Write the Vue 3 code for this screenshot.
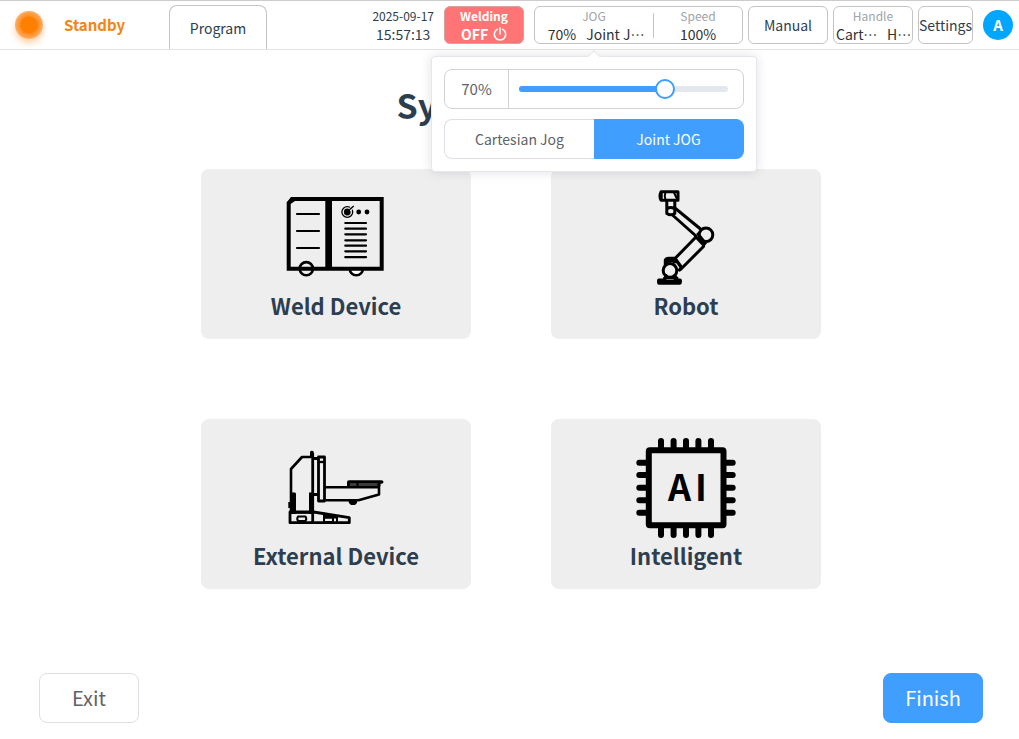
<script setup>
import { ref } from 'vue'

const jogSpeed = ref(70)
const jogMode = ref('Joint JOG')
const jogModes = ['Cartesian Jog', 'Joint JOG']
</script>

<template>
  <div class="app">
    <header class="topbar">
      <div class="status">
        <span class="lamp"></span>
        <strong class="status-text">Standby</strong>
      </div>
      <button class="tab" type="button">Program</button>

      <div class="tools">
        <div class="clock">
          <span class="date">2025-09-17</span>
          <span class="time">15:57:13</span>
        </div>
        <button class="welding" type="button">
          <span class="welding-label">Welding</span>
          <span class="welding-state">
            OFF
            <svg class="power" viewBox="0 0 14 14" aria-hidden="true">
              <path d="M4.3 2.3A5.7 5.7 0 1 0 9.7 2.3M7 .8V7" />
            </svg>
          </span>
        </button>

        <div class="box motion">
          <div class="jog">
            <button class="cell" type="button">
              <span class="caption">JOG</span>
              <span class="values">
                <span class="value">70%</span>
                <span class="value clip jog-name">Joint JOG</span>
              </span>
            </button>
            <div class="popover">
              <span class="arrow"></span>
              <div class="speed-row">
                <label class="speed-value" for="jog-speed">{{ jogSpeed }}%</label>
                <div class="slider">
                  <div class="track">
                    <div class="fill" :style="{ width: jogSpeed + '%' }"></div>
                  </div>
                  <input id="jog-speed" v-model="jogSpeed" class="range" type="range" min="0" max="100" />
                </div>
              </div>
              <div class="modes">
                <button
                  v-for="mode in jogModes"
                  :key="mode"
                  type="button"
                  class="mode"
                  :class="{ active: mode === jogMode }"
                  @click="jogMode = mode"
                >{{ mode }}</button>
              </div>
            </div>
          </div>
          <span class="divider"></span>
          <button class="cell speed" type="button">
            <span class="caption">Speed</span>
            <span class="value">100%</span>
          </button>
        </div>

        <button class="box plain manual" type="button">Manual</button>
        <button class="box cell handle" type="button">
          <span class="caption">Handle</span>
          <span class="handle-values">
            <span class="value clip handle-mode">Cartesian</span>
            <span class="value clip handle-type">Handle</span>
          </span>
        </button>
        <button class="box plain settings" type="button">Settings</button>
        <button class="avatar" type="button">A</button>
      </div>
    </header>

    <main class="page">
      <h1 class="title">System Setup</h1>
      <div class="cards">
        <button class="card" type="button">
          <svg class="icon" viewBox="0 0 100 100" aria-hidden="true">
            <circle cx="70.3" cy="80.7" r="6.6" fill="#fff" stroke="#000" stroke-width="2.6" />
            <path d="M60 71.500h20V79H60z" fill="#eee" />
            <path d="M2.7 80.7V15l3.6-4h89.4v69.7z" fill="none" stroke="#000" stroke-width="4" />
            <path d="M.7 15L5 9h4v4L3 17z" />
            <path d="M39.3 11H46v70h-6.700z" />
            <circle cx="20.3" cy="80.7" r="6.6" fill="none" stroke="#000" stroke-width="2.6" />
            <g stroke="#000" stroke-width="2.2" stroke-linecap="round">
              <path d="M11 26h22M11 43h22M11 60h22" />
              <path d="M59.300 35H80M59.300 40.700H80M59.300 46.300H80M59.300 52.300H80M59.300 57.700H80M59.300 63.300H80M59.300 69.200H80" />
            </g>
            <circle cx="61.3" cy="24" r="5.4" fill="none" stroke="#000" stroke-width="1.3" />
            <circle cx="61.3" cy="24" r="3.4" />
            <path d="M63.500 22L67.500 18.500" stroke="#eee" stroke-width="3" />
            <path d="M61.500 23.500L67.700 18" stroke="#000" stroke-width="1.400" />
            <circle cx="72.7" cy="24" r="2.4" />
            <circle cx="81" cy="24" r="2.4" />
          </svg>
          <span>Weld Device</span>
        </button>
        <button class="card" type="button">
          <svg class="icon" viewBox="0 0 100 100" aria-hidden="true">
            <g fill="none" stroke="#000" stroke-width="3" stroke-linecap="round" stroke-linejoin="round">
              <path d="M25 3.800h17v8.400H25q-2-4.200 0-8.400z" />
              <path d="M25.700 4v8M29.500 4q-1.500 4 0 8M38 4.500l2.500 5.500" stroke-width="2" />
              <path d="M30.800 13v12.500q4 2.500 8 0V13M31.500 20.500q3.200-2 6.500 0" />
              <path d="M39.500 20.500L64.500 41M37 27.500L60 48" />
              <circle cx="70" cy="46.800" r="6.8" />
              <path d="M59.500 48.500L67.500 57l2.500-3M62 46l6 7.500" />
              <path d="M59 50L38.500 71M67.500 58.500L45 81" />
              <path d="M29.500 77v-5q1-1.500 3-1.500h6.500l6.500 9-2 2.500" stroke-width="3.400" />
              <path d="M30.500 74q4-3 8.500 0" />
              <circle cx="34" cy="82.4" r="6.800" fill="#eee" />
              <path d="M28.500 90h12.500M30 87.500l-1.500 4M39 87.500l1.500 4" />
            </g>
            <path d="M23 90.500h6l2 1.500h6l2-1.500h5q2 0 2 3t-2 3.300H23q-2 0-2-3.300t2-3z" />
          </svg>
          <span>Robot</span>
        </button>
        <button class="card" type="button">
          <svg class="icon" viewBox="0 0 100 100" aria-hidden="true">
            <g fill="none" stroke="#000" stroke-width="2.300" stroke-linejoin="round">
              <path d="M5 74V31l11-12h10.500" stroke-width="2.600" />
              <path d="M26.700 15v69M32.500 19v44h6V19zM26.500 20.500h5M26.500 56.500h5" stroke-width="2.800" />
              <path d="M32 24h7" />
              <path d="M39 49.300h54V47v9.500L72.500 62.300H39.500" stroke-width="2.600" />
              <path d="M62 47h31.500" stroke-width="1.500" />
              <path d="M4 74v10.700h59.300v-5L27.500 74z" stroke-width="2.800" />
              <path d="M12 78.500h7.500q1.500 2.500 0 4.500H12q-1.500-2 0-4.500zM38 79.500h9v4.500h-9zM51 79v6" stroke-width="2" />
            </g>
            <path d="M24 14q1-2 3.700-.5V20H24zM61 44.300q0-2 2-2H95.500q2 0 2 1.700t-2 1.800H94.500v2.200h-3v-2.200H72.500v2.700h-2v-2.700H64v3.200h-3zM62.500 63h8.500v2l-2 2h-4l-2-2zM5.500 54.500H9q1 0 1 2V76H5.500zM23 54.500h5V76h-5zM2.300 64H6v6H2.300zM3.500 73h24.500v2.700H3.500zM37 74.500l15 3v3H37z" />
          </svg>
          <span>External Device</span>
        </button>
        <button class="card" type="button">
          <svg class="icon" viewBox="0 0 100 100" aria-hidden="true">
            <g fill="none" stroke="#000" stroke-width="6">
              <rect x="12.800" y="12.300" width="74.700" height="75" rx="1" />
              <path
                stroke-linecap="round"
                d="M25 3v8M37.600 3v8M50 3v8M62.400 3v8M75 3v8M25 89v8M37.600 89v8M50 89v8M62.400 89v8M75 89v8M3.300 24.700h8M3.300 37h8M3.300 49.700h8M3.300 62.300h8M3.300 74.700h8M88.700 24.700h8M88.700 37h8M88.700 49.700h8M88.700 62.300h8M88.700 74.700h8"
              />
            </g>
            <text class="chip-text" x="32 59" y="63">AI</text>
          </svg>
          <span>Intelligent</span>
        </button>
      </div>
      <footer class="actions">
        <button class="action" type="button">Exit</button>
        <button class="action primary" type="button">Finish</button>
      </footer>
    </main>
  </div>
</template>

<style>
body {
  margin: 0;
  background: #fff;
}
</style>

<style scoped>
.app {
  display: flex;
  flex-direction: column;
  min-height: 100vh;
  box-sizing: border-box;
  border-top: 1px solid #ccc;
  color: #2c3e50;
  font-family: "Noto Sans CJK SC", "Noto Sans", sans-serif;
}
.app *,
.app *::before {
  box-sizing: border-box;
}
button {
  margin: 0;
  padding: 0;
  border: 0;
  background: none;
  color: inherit;
  font: inherit;
  cursor: pointer;
}
.topbar {
  display: flex;
  height: 49px;
  padding: 0 6px 0 15px;
  border-bottom: 1px solid #e4e4e4;
}
.status {
  display: flex;
  align-items: center;
  gap: 21px;
  width: 154px;
}
.lamp {
  width: 28px;
  height: 28px;
  border-radius: 50%;
  background: radial-gradient(circle, #ff8000 0 8px, #ff8f26 9px, #ffae66 14px);
  box-shadow: 0 4px 6px #ffd2a8;
}
.status-text {
  color: #f58410;
  font-size: 15px;
  line-height: 24px;
}
.tab {
  align-self: flex-end;
  width: 98px;
  height: 44px;
  border: 1px solid #c4c4c4;
  border-bottom: 0;
  border-radius: 8px 8px 0 0;
  font-size: 14px;
}
.tools {
  display: flex;
  align-items: center;
  margin-left: auto;
  gap: 5px;
}
.clock {
  display: flex;
  flex-direction: column;
  align-items: center;
  margin-right: 5px;
}
.date {
  font-size: 12px;
  line-height: 18px;
}
.time {
  font-size: 14px;
  line-height: 18px;
}
.welding {
  display: flex;
  flex-direction: column;
  align-items: center;
  justify-content: center;
  width: 80px;
  height: 38px;
  margin-right: 5px;
  border: 1px solid #d8a0a0;
  border-radius: 6px;
  background: #ff7575;
  color: #fff;
  font-weight: bold;
}
.welding-label {
  font-size: 12px;
  line-height: 18px;
}
.welding-state {
  display: flex;
  align-items: center;
  gap: 5px;
  font-size: 14px;
  line-height: 18px;
}
.power {
  width: 14px;
  height: 14px;
  fill: none;
  stroke: #fff;
  stroke-width: 1.5;
  stroke-linecap: round;
}
.box {
  height: 38px;
  border: 1px solid #c4c4c4;
  border-radius: 6px;
}
.motion {
  display: flex;
  align-items: center;
  width: 209px;
}
.jog {
  position: relative;
  width: 118px;
}
.jog .cell {
  width: 100%;
}
.cell {
  display: flex;
  flex-direction: column;
  align-items: center;
  justify-content: center;
}
.caption {
  color: #a0a4a8;
  font-size: 12px;
  line-height: 18px;
}
.value {
  color: #303133;
  font-size: 14px;
  line-height: 18px;
  white-space: nowrap;
}
.values {
  display: flex;
  gap: 10px;
  padding-left: 6px;
}
.clip {
  overflow: hidden;
  text-align: left;
  text-overflow: ellipsis;
}
.jog-name {
  width: 60px;
}
.divider {
  width: 1px;
  height: 25px;
  background: #c4c4c4;
}
.speed {
  flex: 1;
}
.plain {
  font-size: 14px;
}
.manual,
.handle {
  width: 80px;
}
.handle-values {
  display: flex;
  align-self: stretch;
  justify-content: space-between;
  padding-left: 2px;
}
.handle-mode {
  width: 44px;
}
.handle-type {
  width: 25px;
}
.settings {
  width: 55px;
}
.avatar {
  width: 30px;
  height: 30px;
  margin-left: 5px;
  border-radius: 50%;
  background: #00a6ff;
  color: #fff;
  font-size: 15px;
  font-weight: bold;
  line-height: 30px;
}
.popover {
  position: absolute;
  z-index: 10;
  top: 49px;
  left: 50%;
  display: flex;
  flex-direction: column;
  gap: 10px;
  width: 326px;
  padding: 12px;
  transform: translateX(-50%);
  border: 1px solid #e4e7ed;
  border-radius: 4px;
  background: #fff;
  box-shadow: 0 0 12px rgba(0, 0, 0, 0.12);
  color: #606266;
  font-size: 14px;
}
.arrow {
  position: absolute;
  top: -5px;
  left: 50%;
  width: 10px;
  height: 10px;
  margin-left: -5px;
  transform: rotate(45deg);
  border: 1px solid #e4e7ed;
  border-right-color: transparent;
  border-bottom-color: transparent;
  background: #fff;
}
.speed-row {
  display: flex;
  height: 40px;
  border: 1px solid #d0d2d4;
  border-radius: 8px;
}
.speed-value {
  width: 64px;
  border-right: 1px solid #d0d2d4;
  font-size: 15px;
  line-height: 38px;
  text-align: center;
}
.slider {
  position: relative;
  flex: 1;
  display: flex;
  align-items: center;
  padding: 0 15px 0 10px;
}
.track {
  flex: 1;
  height: 6px;
  border-radius: 3px;
  background: #e4e7ed;
}
.fill {
  height: 6px;
  border-radius: 3px;
  background: #409eff;
}
.range {
  position: absolute;
  top: 0;
  left: 0;
  width: calc(100% - 5px);
  height: 100%;
  margin: 0;
  appearance: none;
  background: transparent;
}
.range::-webkit-slider-thumb {
  width: 20px;
  height: 20px;
  box-sizing: border-box;
  appearance: none;
  border: 2px solid #409eff;
  border-radius: 50%;
  background: #fff;
}
.modes {
  display: flex;
  height: 40px;
}
.mode {
  flex: 1;
  padding-bottom: 1px;
  border: 1px solid #dcdfe6;
}
.mode:first-child {
  border-right: 0;
  border-radius: 8px 0 0 8px;
}
.mode:last-child {
  border-left: 0;
  border-radius: 0 8px 8px 0;
}
.mode.active {
  border-color: #409eff;
  background: #409eff;
  color: #fff;
}
.page {
  display: flex;
  flex: 1;
  flex-direction: column;
  padding: 31px 36px 16px 39px;
}
.title {
  margin: 0 0 40px;
  font-size: 34px;
  line-height: 48px;
  text-align: center;
}
.cards {
  display: grid;
  grid-template-columns: repeat(2, 270px);
  justify-content: center;
  gap: 80px;
}
.card {
  display: flex;
  flex-direction: column;
  align-items: center;
  height: 170px;
  padding-top: 19px;
  border-radius: 8px;
  background: #eee;
  font-size: 22px;
  font-weight: bold;
  line-height: 34px;
}
.icon {
  width: 100px;
  height: 100px;
}
.chip-text {
  font-size: 36px;
  font-weight: bold;
}
.actions {
  display: flex;
  justify-content: space-between;
  margin-top: auto;
}
.action {
  width: 100px;
  height: 50px;
  padding-bottom: 2px;
  border: 1px solid #dcdfe6;
  border-radius: 8px;
  color: #606266;
  font-size: 20px;
}
.action.primary {
  border-color: #409eff;
  background: #409eff;
  color: #fff;
}
</style>
